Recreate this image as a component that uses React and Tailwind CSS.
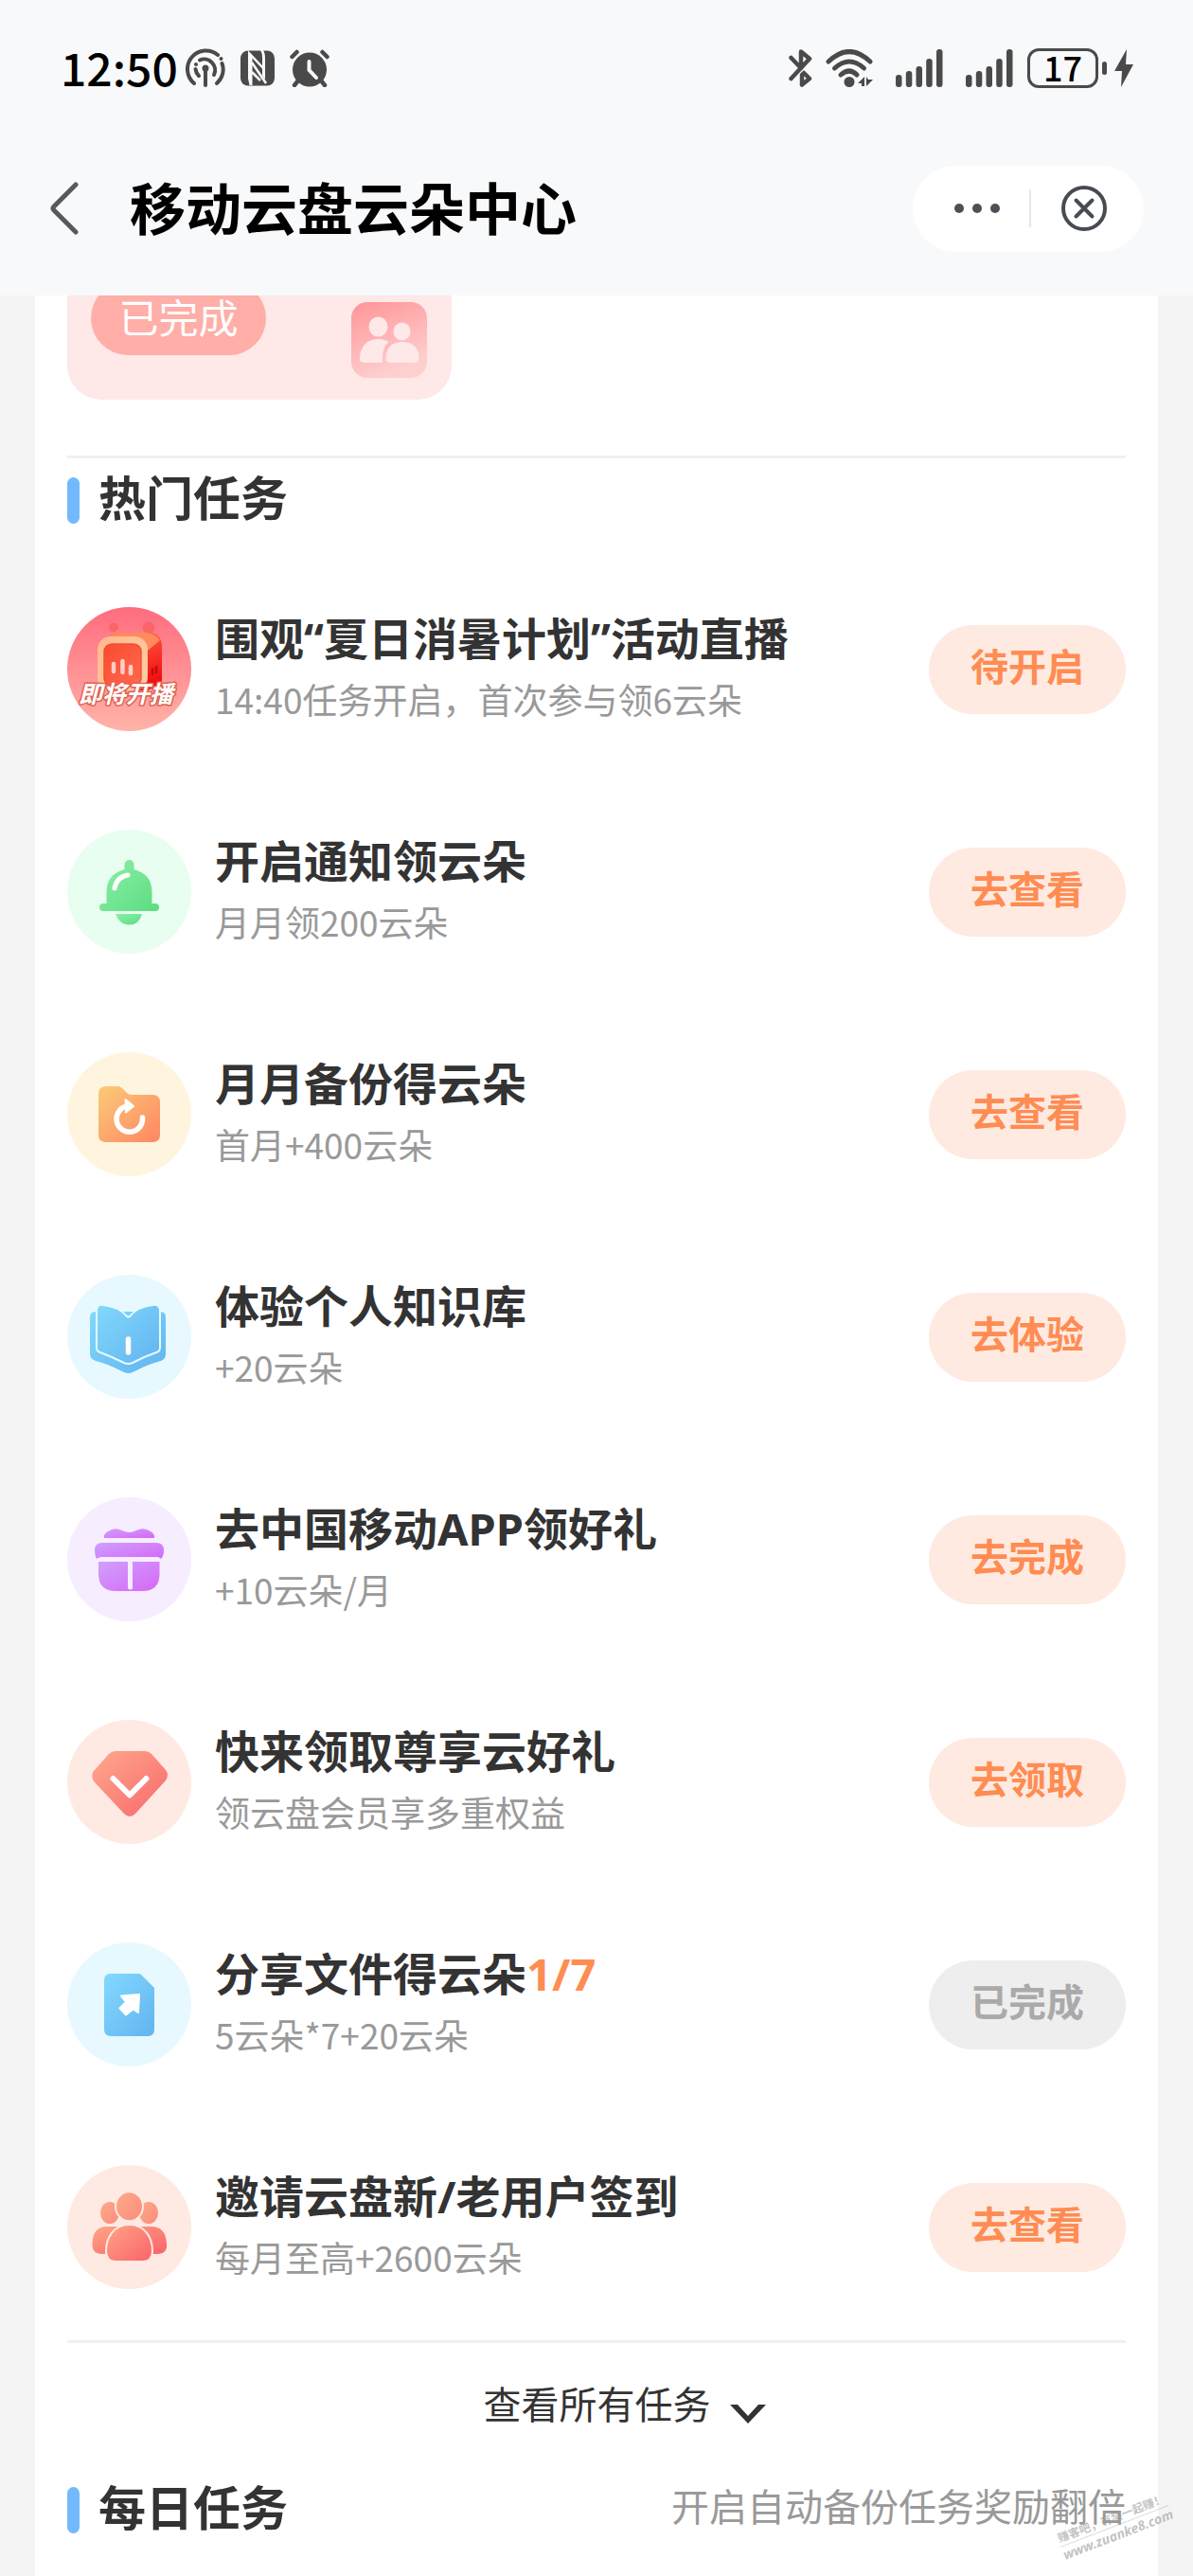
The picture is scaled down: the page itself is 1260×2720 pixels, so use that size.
import React from "react";

const BroadcastIcon = () => (
  <svg className="w-[42px] h-[42px]" viewBox="0 0 42 42" fill="none" stroke="#4a4a4a" strokeWidth="4" strokeLinecap="round">
    <path d="M9 37A19 19 0 1 1 34 7" />
    <path d="M38.500 16A19 19 0 0 1 33 37" />
    <path d="M15 12.500A11.500 11.500 0 0 1 30 28" />
    <path d="M10.500 22A11.500 11.500 0 0 0 14 29" />
    <path d="M21 22V39" />
    <circle cx="21" cy="21" r="3.500" fill="#4a4a4a" stroke="none" />
    <circle cx="37.500" cy="11" r="2" fill="#4a4a4a" stroke="none" />
    <circle cx="11" cy="17" r="2" fill="#4a4a4a" stroke="none" />
  </svg>
);

const NfcIcon = () => (
  <svg className="w-[36px] h-[38px]" viewBox="0 0 36 38">
    <rect width="36" height="37" y="0.500" rx="8" fill="#4a4a4a" />
    <path d="M8 0L12.500 6V37H9.500L8 30Z" fill="#f8f9fb" />
    <path d="M24 0Q26 3 26 9V31L23 27V8Q23 3 21 0Z" fill="#f8f9fb" />
    <path d="M9 3L24 19M12 13L27 35M12 23L21 32" fill="none" stroke="#f8f9fb" strokeWidth="2.500" />
  </svg>
);

const AlarmIcon = () => (
  <svg className="w-[42px] h-[40px]" viewBox="0 0 42 40" fill="none" stroke="#4a4a4a" strokeWidth="4.500" strokeLinecap="round">
    <circle cx="21" cy="21.500" r="18" fill="#4a4a4a" stroke="none" />
    <path d="M2.500 8L7.500 3M39.500 8L34.500 3M9 33L5 38M33 33L37 38" />
    <path d="M20.500 13V22L28 30" stroke="#f8f9fb" strokeWidth="4" />
  </svg>
);

const BluetoothIcon = () => (
  <svg className="w-[25px] h-[40px]" viewBox="0 0 25 40" fill="none" stroke="#4a4a4a" strokeWidth="4.500" strokeLinecap="round" strokeLinejoin="round">
    <path d="M2.500 9L13 20V2.500L22 10L2.500 31" />
    <path d="M14 37.500V27L16 25L22 31L14 37.500" />
  </svg>
);

const WifiIcon = () => (
  <svg className="w-[50px] h-[40px]" viewBox="0 0 50 40" fill="none" stroke="#4a4a4a" strokeWidth="5" strokeLinecap="round">
    <path d="M3 13Q25 -8 47 13" />
    <path d="M9.500 20Q25 6 40.500 20" />
    <path d="M16 27Q25 19 33 27" />
    <circle cx="25" cy="34.500" r="5.500" fill="#4a4a4a" stroke="none" />
    <path d="M41 29V39H38V36H34ZM43 39V29L45 32H50Z" fill="#4a4a4a" stroke="none" />
  </svg>
);

const SignalIcon = () => (
  <svg className="w-[50px] h-[40px]" viewBox="0 0 50 40" fill="#4a4a4a">
    <rect x="0" y="27" width="6.500" height="13" rx="3" />
    <rect x="10.800" y="23" width="6.500" height="17" rx="3" />
    <rect x="21.500" y="18" width="6.500" height="22" rx="3" />
    <rect x="32.200" y="10" width="6.500" height="30" rx="3" />
    <rect x="43" y="0" width="6.500" height="40" rx="3" />
  </svg>
);

const Circle = ({ fill, children }) => (
  <svg className="w-[131px] h-[131px] shrink-0" viewBox="0 0 131 131" aria-hidden="true">
    <circle cx="65.500" cy="65.500" r="65.500" fill={fill} />
    {children}
  </svg>
);

const Gradient = ({ id, from, to, x2 = "1" }) => (
  <linearGradient id={id} x1="0" y1="0" x2={x2} y2="1">
    <stop offset="0" stopColor={from} />
    <stop offset="1" stopColor={to} />
  </linearGradient>
);

const LiveIcon = () => (
  <Circle fill="url(#liveBg)">
    <defs>
      <Gradient id="liveBg" from="#ff6c7e" to="#ffb3a8" x2="0" />
      <Gradient id="liveFrame" from="#ffb88c" to="#ffcfa6" />
      <Gradient id="liveScreen" from="#fb4a30" to="#ff6a4e" />
      <Gradient id="liveSide" from="#ff6a4a" to="#f20f10" x2="0.300" />
    </defs>
    <path d="M49 22L54 31M86 22L80 32" stroke="#ff8478" strokeWidth="5" />
    <circle cx="49" cy="21.500" r="5" fill="#fb6569" />
    <circle cx="86" cy="22" r="6.500" fill="#fb6569" />
    <path d="M46 30Q50 27 60 27H86Q100 28 100 42V78Q98 84 84 88H70Z" fill="url(#liveSide)" />
    <path d="M45 31Q50 27 60 27H84Q94 28 98 35L85 46L74 31Z" fill="#ff8a5e" />
    <rect x="32" y="31" width="53" height="57" rx="14" fill="url(#liveFrame)" />
    <rect x="39" y="39" width="39" height="44" rx="8" fill="url(#liveScreen)" stroke="#ef5130" strokeWidth="1.500" />
    <path d="M49 60V68M58.500 57V69M67 63V70" stroke="#ffcfc8" strokeWidth="4.500" strokeLinecap="round" />
    <path d="M90 64V72M94 62V70" stroke="#c40a0c" strokeWidth="2.500" />
    <g className="text-[25px] font-bold italic" textAnchor="middle">
      <text
        x="62"
        y="101"
        fill="#fff"
        stroke="#e0604f"
        strokeWidth="3"
        strokeLinejoin="round"
        paintOrder="stroke"
      >
        即将开播
      </text>
    </g>
  </Circle>
);

const BellIcon = () => (
  <Circle fill="#e8fef0">
    <defs>
      <Gradient id="bell" from="#8cf0a8" to="#5cdc82" />
    </defs>
    <path d="M60.500 42V37A5 5 0 0 1 70.500 37V42Q89.500 47 89.500 66V78H93A4 4 0 0 1 93 86H38A4 4 0 0 1 38 78H41.500V66Q41.500 47 60.500 42Z" fill="url(#bell)" />
    <path d="M51 89H79Q76 100.500 65.500 100.500T51 89Z" fill="url(#bell)" />
    <path d="M64 48Q52 50 50 62" fill="none" stroke="#fff" strokeWidth="5" strokeLinecap="round" />
  </Circle>
);

const BackupIcon = () => (
  <Circle fill="#fff5df">
    <defs>
      <Gradient id="backup" from="#fbcb78" to="#ff8661" />
    </defs>
    <path d="M41 36H53Q56 36 58 38L63 43Q65 45 68 45H90Q98 45 98 53V87Q98 95 90 95H41Q33 95 33 87V44Q33 36 41 36Z" fill="url(#backup)" />
    <path d="M79.500 69A13.800 13.800 0 1 1 61 57.500" fill="none" stroke="#fff" strokeWidth="5.500" strokeLinecap="round" />
    <path d="M61.500 50L70 57L62 63.500Z" fill="#fff" stroke="#fff" strokeWidth="2" strokeLinejoin="round" />
  </Circle>
);

const BookIcon = () => (
  <Circle fill="#e7f9ff">
    <defs>
      <Gradient id="book" from="#82d8fd" to="#62b4ee" />
    </defs>
    <path d="M24 45Q24 39 30 39H98Q104 39 104 45V84Q104 89 99 91Q89 93 71 102Q64.500 106 58 102Q40 93 30 91Q24 89 24 84Z" fill="url(#book)" />
    <path
      d="M31 38Q31 31 38 32Q55 34 62 43Q64.500 46 67 43Q74 34 90 32Q98 31 98 38V77Q98 81 94 82Q80 87 69 93Q64.500 95 60 93Q48 87 35 82Q31 81 31 77Z"
      fill="url(#book)"
      stroke="#e7f9ff"
      strokeWidth="2"
    />
    <path d="M64.500 68V82" stroke="#fff" strokeWidth="5.500" strokeLinecap="round" />
  </Circle>
);

const GiftIcon = () => (
  <Circle fill="#f6edff">
    <defs>
      <Gradient id="gift" from="#cfa0fd" to="#d667f6" />
    </defs>
    <path d="M39 43Q38 39 43 36Q50 31 58 35Q66 39 73 35Q81 31 88 36Q93 39 92 43Z" fill="url(#gift)" />
    <path d="M37 48H94Q102 48 102 56Q102 62 99 65Q98 64 96 63H35Q33 64 31 65Q29 61 29 56Q29 48 37 48Z" fill="url(#gift)" />
    <path d="M33 68H97.500V81Q97.500 99 79 99H52Q33 99 33 81Z" fill="url(#gift)" />
    <path d="M66.500 67V95" stroke="#f6edff" strokeWidth="5" strokeLinecap="round" />
  </Circle>
);

const DiamondIcon = () => (
  <Circle fill="#feeae2">
    <defs>
      <Gradient id="diamond" from="#ffa98c" to="#f8676c" />
    </defs>
    <path d="M51 33H82Q86 33 89 36L104 53Q108 58 104 64L72 99Q66 105 60 99L29 66Q24 60 28 54L44 36Q47 33 51 33Z" fill="url(#diamond)" />
    <path d="M48.500 62L66 79.500L83.500 62" fill="none" stroke="#fff" strokeWidth="6" strokeLinecap="round" strokeLinejoin="round" />
  </Circle>
);

const ShareIcon = () => (
  <Circle fill="#e7f9ff">
    <defs>
      <Gradient id="share" from="#82dafd" to="#62b3f0" />
    </defs>
    <path d="M46 33H77L92 48V92Q92 99 85 99H46Q39 99 39 92V40Q39 33 46 33Z" fill="url(#share)" />
    <path d="M57 56.500L76 55L75 74L69.500 70.500L62 76.500L55.500 69.500L62 63Z" fill="#fff" stroke="#fff" strokeWidth="2" strokeLinejoin="round" />
  </Circle>
);

const InviteIcon = () => (
  <Circle fill="#feeae2">
    <defs>
      <Gradient id="invite" from="#ffa585" to="#fa626c" />
      <Gradient id="inviteHead" from="#ffa98a" to="#fb8c7c" />
    </defs>
    <ellipse cx="45" cy="50.500" rx="10" ry="11.500" fill="url(#inviteHead)" />
    <ellipse cx="86" cy="50.500" rx="10" ry="11.500" fill="url(#inviteHead)" />
    <path d="M26.500 83Q27 65 42 65H89Q104 65 105 83Q106 94 95 94H37Q26 94 26.500 83Z" fill="url(#invite)" />
    <ellipse cx="65.500" cy="43.700" rx="14.500" ry="15.500" fill="url(#inviteHead)" stroke="#feeae2" strokeWidth="2" />
    <path d="M65.500 63C83 63 90 78 90 91Q90 102 79 102H52Q41 102 41 91C41 78 48 63 65.500 63Z" fill="url(#invite)" stroke="#feeae2" strokeWidth="2" />
  </Circle>
);

const FriendsIcon = () => (
  <svg className="w-20 h-20" viewBox="0 0 80 80" aria-hidden="true">
    <defs>
      <Gradient id="friends" from="#ff9496" to="#fdd0d0" x2="0.400" />
    </defs>
    <rect width="80" height="80" rx="17" fill="url(#friends)" />
    <g fill="#fee8e8">
      <ellipse cx="28.500" cy="26" rx="10" ry="10.500" />
      <ellipse cx="53.500" cy="31" rx="9" ry="9.500" />
      <path d="M9 58Q11 39 29 39Q35 39 39.500 42Q32 48 33 64H15Q8 64 9 58Z" />
      <path d="M36.500 58Q38 42 54 42T71.500 58Q72 64 66 64H42Q36 64 36.500 58Z" />
    </g>
  </svg>
);

const tasks = [
  { icon: LiveIcon, title: "围观“夏日消暑计划”活动直播", desc: "14:40任务开启，首次参与领6云朵", action: "待开启" },
  { icon: BellIcon, title: "开启通知领云朵", desc: "月月领200云朵", action: "去查看" },
  { icon: BackupIcon, title: "月月备份得云朵", desc: "首月+400云朵", action: "去查看" },
  { icon: BookIcon, title: "体验个人知识库", desc: "+20云朵", action: "去体验" },
  { icon: GiftIcon, title: "去中国移动APP领好礼", desc: "+10云朵/月", action: "去完成" },
  { icon: DiamondIcon, title: "快来领取尊享云好礼", desc: "领云盘会员享多重权益", action: "去领取" },
  { icon: ShareIcon, title: "分享文件得云朵", progress: "1/7", desc: "5云朵*7+20云朵", action: "已完成", done: true },
  { icon: InviteIcon, title: "邀请云盘新/老用户签到", desc: "每月至高+2600云朵", action: "去查看" },
];

const SectionTitle = ({ children }) => (
  <div className="flex items-end gap-5">
    <span className="w-[13px] h-[49px] rounded-full bg-[#73b9ff]" />
    <h2 className="text-[50px] leading-[60px] font-bold">{children}</h2>
  </div>
);

const TaskRow = ({ task }) => {
  const Icon = task.icon;

  return (
    <li className="h-[235px] flex items-center">
      <Icon />
      <div className="flex-1 ml-[25px] pb-0.5">
        <h3 className="font-['Noto_Sans','Noto_Sans_CJK_SC',sans-serif] text-[47px] leading-[64px] font-bold">
          {task.title}
          {task.progress && <span className="text-[#ff8c52]">{task.progress}</span>}
        </h3>
        <p className="text-[37px] leading-[64px] text-[#999]">{task.desc}</p>
      </div>
      <button
        type="button"
        disabled={task.done}
        className={`w-[208px] h-[94px] pb-2.5 rounded-full text-[40px] font-bold ${
          task.done ? "bg-[#eeeeee] text-[#aaaaaa]" : "bg-[#feeae1] text-[#ff8c52]"
        }`}
      >
        {task.action}
      </button>
    </li>
  );
};

const App = () => {
  return (
    <div className="relative min-h-screen overflow-hidden bg-[#f4f4f4] text-[#333] font-['Noto_Sans_CJK_SC',sans-serif]">
      <header className="bg-[#f8f9fb] pb-4 text-black">
        {/* status bar */}
        <div className="h-36 pl-16 pr-[63px] flex items-center justify-between">
          <div className="flex items-center">
            <span className="text-[48px] leading-[60px] pb-1 mr-2 font-medium">12:50</span>
            <BroadcastIcon />
            <span className="w-4" />
            <NfcIcon />
            <span className="w-4" />
            <AlarmIcon />
          </div>
          <div className="flex items-center">
            <BluetoothIcon />
            <span className="w-[14px]" />
            <WifiIcon />
            <span className="w-6" />
            <SignalIcon />
            <span className="w-6" />
            <SignalIcon />
            <span className="w-[15px]" />
            <span className="w-[75px] h-[42px] pb-1 border-[3px] border-[#4a4a4a] rounded-xl flex items-center justify-center text-[36px] leading-9 font-medium">
              17
            </span>
            <span className="w-[5px] h-[14px] ml-1 rounded-full bg-[#4a4a4a]" />
            <svg className="w-5 h-10 ml-2" viewBox="0 0 20 40" fill="#4a4a4a">
              <path d="M13 0L0 23H8L7 40L20 16H12Z" />
            </svg>
          </div>
        </div>

        {/* nav bar */}
        <div className="h-[152px] pl-[52px] pr-[52px] flex items-center">
          <button type="button" aria-label="返回">
            <svg className="w-8 h-14" viewBox="0 0 32 56" fill="none" stroke="#555a60" strokeWidth="5" strokeLinecap="round" strokeLinejoin="round">
              <path d="M28 3L5 26Q3 28 5 30L28 53" />
            </svg>
          </button>
          <h1 className="ml-[53px] flex-1 font-['Noto_Sans','Noto_Sans_CJK_SC',sans-serif] text-[59px] leading-[72px] font-bold">
            移动云盘云朵中心
          </h1>
          <div className="w-[244px] h-[91px] rounded-full bg-white flex items-center">
            <button type="button" aria-label="更多" className="flex-1 pl-3 flex justify-center">
              <svg className="w-12 h-3" viewBox="0 0 48 12" fill="#4c5159">
                <circle cx="5" cy="6" r="5" />
                <circle cx="24" cy="6" r="5" />
                <circle cx="43" cy="6" r="5" />
              </svg>
            </button>
            <span className="w-0.5 h-10 bg-[#e5e6e8]" />
            <button type="button" aria-label="关闭" className="flex-1 pr-2 flex justify-center">
              <svg className="w-12 h-12" viewBox="0 0 48 48" fill="none" stroke="#474b53" strokeWidth="4" strokeLinecap="round">
                <circle cx="24" cy="24" r="22" />
                <path d="M15.500 15.500L32.500 32.500M32.500 15.500L15.500 32.500" />
              </svg>
            </button>
          </div>
        </div>
      </header>

      <main className="mx-[37px] px-[34px] pb-[45px] bg-white">
        <div className="w-[406px] h-[110px] pl-[25px] pr-[26px] flex justify-between overflow-hidden rounded-b-[36px] bg-[#fee8e8]">
          <button type="button" className="w-[185px] h-[78px] -mt-[15px] pb-1 rounded-full bg-[#ffaea8] text-white text-[42px] leading-[60px]">
            已完成
          </button>
          <div className="pt-[7px]">
            <FriendsIcon />
          </div>
        </div>

        <section className="mt-[59px] pt-[9px] border-t-[3px] border-[#f0f0f0]">
          <SectionTitle>热门任务</SectionTitle>
          <ul className="mt-9">
            {tasks.map((task) => (
              <TaskRow key={task.title} task={task} />
            ))}
          </ul>
        </section>

        <div className="mt-0.5 pt-[33px] border-t-[3px] border-[#f0f0f0] flex justify-center">
          <button type="button" className="pl-[59px] flex items-center gap-5 text-[40px] leading-[60px]">
            查看所有任务
            <svg className="w-[38px] h-5 mt-6" viewBox="0 0 38 20" fill="#333">
              <path d="M0 0H8L19 12L30 0H38L19 20Z" />
            </svg>
          </button>
        </div>

        <section className="mt-12 flex items-end justify-between">
          <SectionTitle>每日任务</SectionTitle>
          <p className="text-[40px] leading-[60px] text-[#999]">开启自动备份任务奖励翻倍</p>
        </section>
      </main>

      {/* site stamp over the corner */}
      <div className="absolute right-[22px] bottom-[34px] w-[122px] -rotate-[21deg] text-center text-[#999]/60 pointer-events-none">
        <p className="text-[12px] leading-[18px] font-bold whitespace-nowrap border-b border-[#999]/40">赚客吧，有奖一起赚！</p>
        <p className="font-['Noto_Sans',sans-serif] text-[14px] leading-[18px] font-bold italic">www.zuanke8.com</p>
      </div>
    </div>
  );
};

export default App;
